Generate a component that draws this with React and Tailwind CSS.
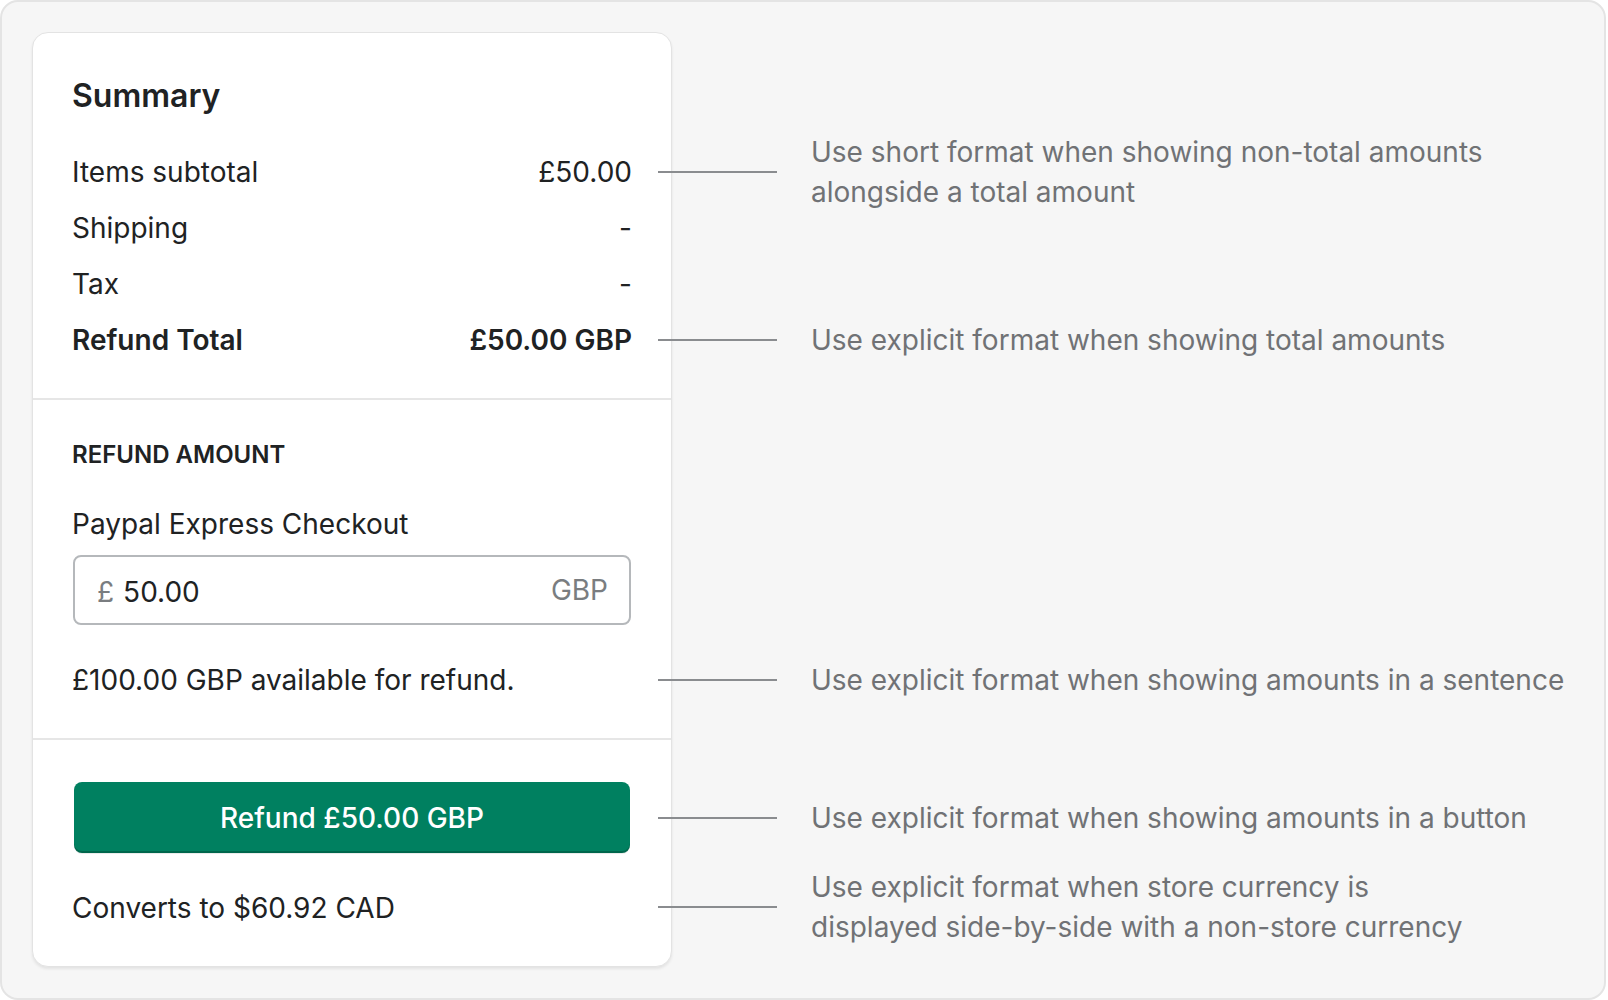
import React from 'react';

const font = { fontFamily: 'Inter, "Noto Sans", sans-serif' };

const SummaryRow = ({ label, value, bold }) => (
  <div className={`flex justify-between leading-[40px] text-[28px] ${bold ? 'font-semibold' : ''}`}>
    <span>{label}</span>
    <span>{value}</span>
  </div>
);

const Note = ({ className, children }) => (
  <div className={`flex items-center ${className}`}>
    <div className="w-[119px] h-[2px] bg-[#8a8c8f] shrink-0"></div>
    <p className="ml-[34px] text-[28px] leading-[40px] text-[#707275] whitespace-nowrap">
      {children}
    </p>
  </div>
);

const App = () => {
  return (
    <div style={font} className="w-[1608px] h-[1000px] bg-white">
      <div className="h-[1000px] w-[1606px] border-2 border-[#e4e4e4] rounded-[18px] bg-[#f6f6f6] pt-[30px] pl-[30px] flex items-start">
        {/* Card */}
        <div className="w-[640px] bg-white border border-[#e3e3e3] rounded-[16px] shadow-[0_2px_3px_rgba(0,0,0,0.08)] text-[#202223]">
          {/* Summary */}
          <div className="px-[39px] pt-[43px] pb-[38px] border-b-2 border-[#e6e6e6]">
            <h2 className="text-[32px] leading-[40px] font-semibold">Summary</h2>
            <div className="mt-[36px] flex flex-col gap-4">
              <SummaryRow label="Items subtotal" value="£50.00" />
              <SummaryRow label="Shipping" value="-" />
              <SummaryRow label="Tax" value="-" />
              <SummaryRow label="Refund Total" value="£50.00 GBP" bold />
            </div>
          </div>

          {/* Refund amount */}
          <div className="px-[39px] pt-[39px] pb-[38px] border-b-2 border-[#e6e6e6]">
            <h3 className="text-[24px] leading-[32px] font-semibold uppercase">Refund amount</h3>
            <p className="mt-[33px] text-[28px] leading-[40px]">Paypal Express Checkout</p>
            <div className="mt-[11px] mx-[1px] h-[70px] border-2 border-[#b5b8bb] rounded-[8px] flex items-center justify-between pl-[22px] pr-[21px] text-[28px]">
              <div className="flex items-baseline">
                <span className="text-[#7a7d80]">£</span>
                <span className="ml-[9px] mt-[4px]">50.00</span>
              </div>
              <span className="text-[#7a7d80]">GBP</span>
            </div>
            <p className="mt-[35px] text-[28px] leading-[40px]">£100.00 GBP available for refund.</p>
          </div>

          {/* Refund action */}
          <div className="px-[39px] pt-[42px] pb-[38px]">
            <button className="w-[556px] mx-[2px] h-[71px] rounded-[8px] bg-[#008060] text-white text-[28px] font-medium shadow-[inset_0_-2px_0_rgba(0,0,0,0.2),0_1px_0_rgba(0,0,0,0.08)]">
              Refund £50.00 GBP
            </button>
            <p className="mt-[35px] text-[28px] leading-[40px]">Converts to $60.92 CAD</p>
          </div>
        </div>

        {/* Annotations */}
        <div className="ml-[-14px] relative z-10 flex flex-col">
          <Note className="mt-[100px]">
            Use short format when showing non-total amounts
            <br />
            alongside a total amount
          </Note>
          <Note className="mt-[108px]">Use explicit format when showing total amounts</Note>
          <Note className="mt-[300px]">Use explicit format when showing amounts in a sentence</Note>
          <Note className="mt-[98px]">Use explicit format when showing amounts in a button</Note>
          <Note className="mt-[29px]">
            Use explicit format when store currency is
            <br />
            displayed side-by-side with a non-store currency
          </Note>
        </div>
      </div>
    </div>
  );
};

export default App;
